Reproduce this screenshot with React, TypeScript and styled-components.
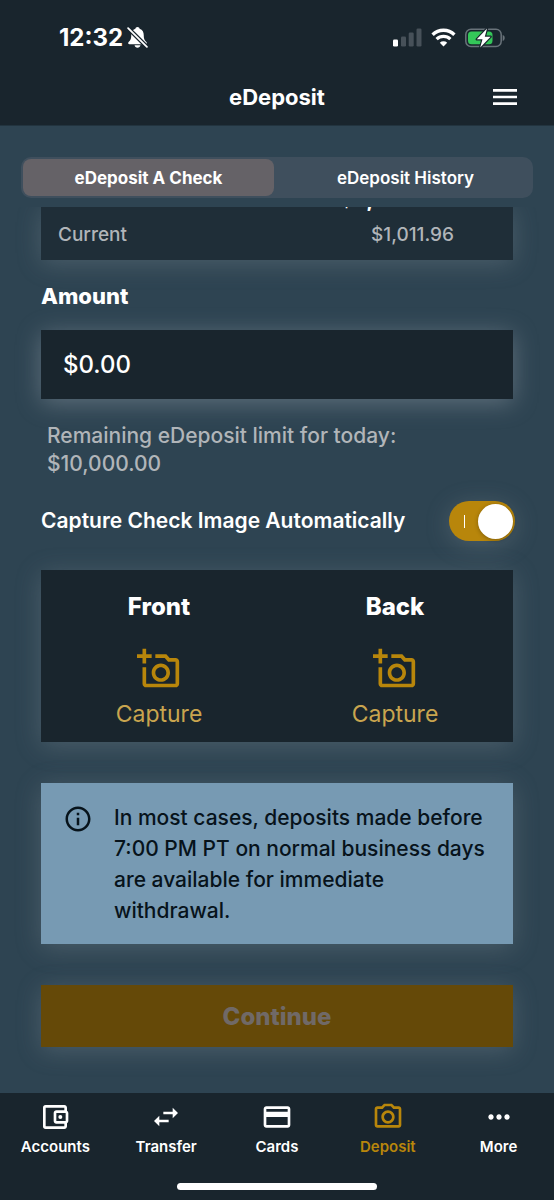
import React, { useState } from "react";
import styled, { createGlobalStyle } from "styled-components";
import {
  MdCreditCard,
  MdMenu,
  MdMoreHoriz,
  MdOutlineAccountBalanceWallet,
  MdOutlineAddAPhoto,
  MdOutlineInfo,
  MdOutlinePhotoCamera,
  MdSwapHoriz,
} from "react-icons/md";

const GlobalStyle = createGlobalStyle`
  *, *::before, *::after { box-sizing: border-box; }
  body {
    margin: 0;
    background: #2e4452;
    font-family: Inter, "Liberation Sans", sans-serif;
    color: #fff;
  }
  button, input { font-family: inherit; }
  h1, h2, h3, p, dl, dd, dt { margin: 0; }
`;

const color = {
  ink: "#19252d",
  gold: "#b8860b",
  muted: "#b1b5b9",
  glow: "0 4px 24px rgba(150, 160, 170, 0.28)",
};

const Screen = styled.div`
  display: flex;
  flex-direction: column;
  min-height: 100vh;
`;

const Header = styled.header`
  background: ${color.ink};
  border-bottom: 1px solid #22343f;
`;

const StatusBar = styled.div`
  display: flex;
  align-items: center;
  justify-content: space-between;
  height: 70px;
  padding: 5px 48px 0 59px;
`;

const StatusGroup = styled.div`
  display: flex;
  align-items: center;
  gap: 9px;
`;

const Clock = styled.div`
  display: flex;
  align-items: center;
  gap: 4px;
  font-size: 24px;
  font-weight: 700;
  line-height: 28px;
`;

const TitleBar = styled.div`
  display: grid;
  grid-template-columns: 1fr auto 1fr;
  align-items: center;
  height: 55px;
  padding: 0 33px 2px;
`;

const Title = styled.h1`
  grid-column: 2;
  font-size: 22px;
  font-weight: 700;
  line-height: 28px;
`;

const IconButton = styled.button`
  display: flex;
  justify-self: end;
  padding: 0;
  border: 0;
  background: none;
  color: #fff;
`;

const Main = styled.main`
  display: flex;
  flex: 1;
  flex-direction: column;
  padding-top: 31px;
`;

const Tabs = styled.div`
  display: grid;
  grid-template-columns: 1fr 1fr;
  column-gap: 6px;
  margin: 0 21px 9px;
  padding: 2px;
  border-radius: 10px;
  background: #3f4f5d;
`;

const Tab = styled.button<{ $active?: boolean }>`
  height: 37px;
  padding: 0;
  border: 0;
  border-radius: 8px;
  background: ${(p) => (p.$active ? "#656267" : "transparent")};
  color: #fff;
  font-size: 17px;
  font-weight: ${(p) => (p.$active ? 700 : 600)};
  line-height: 24px;
`;

const Viewport = styled.div`
  flex: 1;
  padding: 0 41px 45px;
  overflow: hidden;
`;

const Balances = styled.dl`
  display: flex;
  flex-direction: column;
  justify-content: flex-end;
  height: 53px;
  background: #1f2e38;
  box-shadow: ${color.glow};
  padding: 0 59px 11px 17px;
  clip-path: inset(0 -41px -41px);
`;

const Balance = styled.div<{ $strong?: boolean }>`
  display: flex;
  flex: none;
  align-items: baseline;
  justify-content: space-between;
  color: ${(p) => (p.$strong ? "#fff" : color.muted)};
  font-size: ${(p) => (p.$strong ? 21 : 19)}px;
  font-weight: ${(p) => (p.$strong ? 600 : 500)};
  line-height: ${(p) => (p.$strong ? 44 : 28)}px;

  dd { font-size: ${(p) => (p.$strong ? 26 : 19)}px; }
`;

const AmountLabel = styled.label`
  display: block;
  margin: 22px 0 19px;
  font-size: 22px;
  font-weight: 800;
  line-height: 29px;
`;

const AmountInput = styled.input`
  display: block;
  width: 100%;
  height: 69px;
  padding: 0 22px;
  border: 0;
  border-radius: 0;
  background: ${color.ink};
  box-shadow: 0 4px 24px rgba(170, 178, 188, 0.4);
  color: #fff;
  font-size: 24px;
  font-weight: 500;
`;

const Limit = styled.p`
  margin: 23px 6px 0;
  color: ${color.muted};
  font-size: 21px;
  font-weight: 500;
  line-height: 28px;
`;

const ToggleRow = styled.label`
  display: flex;
  align-items: center;
  justify-content: space-between;
  margin: 23px -2px 29px 0;
  font-size: 21px;
  font-weight: 600;
  line-height: 28px;
`;

const Toggle = styled.input`
  display: flex;
  align-items: center;
  justify-content: space-between;
  appearance: none;
  width: 66px;
  height: 40px;
  margin: 0;
  padding: 0 2px 0 15px;
  border-radius: 20px;
  background: #5a646c;
  box-shadow: ${color.glow};

  &::before {
    content: "";
    width: 1px;
    height: 13px;
    background: #fff;
  }
  &::after {
    content: "";
    width: 35px;
    height: 35px;
    border-radius: 50%;
    background: #fff;
    box-shadow: 0 1px 4px rgba(0, 0, 0, 0.3);
  }
  &:checked { background: ${color.gold}; }
`;

const CapturePanel = styled.section`
  display: grid;
  grid-template-columns: 1fr 1fr;
  padding: 21px 0 13px;
  background: ${color.ink};
  box-shadow: ${color.glow};
`;

const CaptureSide = styled.div`
  display: flex;
  flex-direction: column;
  align-items: center;
  gap: 24px;
`;

const SideTitle = styled.h2`
  font-size: 24px;
  font-weight: 800;
  line-height: 32px;
`;

const CaptureButton = styled.button`
  display: flex;
  flex-direction: column;
  align-items: center;
  gap: 8px;
  padding: 0;
  border: 0;
  background: none;
  color: #c9a54f;
  font-size: 23px;
  font-weight: 400;
  line-height: 30px;

  svg { color: ${color.gold}; }
`;

const Notice = styled.section`
  display: flex;
  gap: 21px;
  margin: 41px 0;
  padding: 19px 22px 18px;
  background: #779ab3;
  box-shadow: ${color.glow};
  color: #07131b;
  font-size: 21px;
  font-weight: 500;
  line-height: 31px;

  svg { flex: none; margin-top: 2px; }
`;

const Continue = styled.button`
  display: block;
  width: 100%;
  height: 62px;
  border: 0;
  background: #654908;
  box-shadow: ${color.glow};
  color: #706967;
  font-size: 24px;
  font-weight: 800;
`;

const TabBar = styled.nav`
  display: grid;
  grid-template-columns: repeat(5, 1fr);
  padding: 8px 0 26px;
  background: ${color.ink};
`;

const NavLink = styled.a<{ $active?: boolean }>`
  display: flex;
  flex-direction: column;
  align-items: center;
  gap: 4px;
  color: ${(p) => (p.$active ? color.gold : "#fff")};
  font-size: 15px;
  font-weight: 600;
  line-height: 20px;
  text-decoration: none;
`;

const HomeArea = styled.div`
  display: flex;
  justify-content: center;
  padding-bottom: 10px;
  background: ${color.ink};
`;

const HomeIndicator = styled.div`
  width: 36%;
  height: 7px;
  border-radius: 4px;
  background: #fff;
`;

const BellSlash = () => (
  <svg width="21" height="23" viewBox="0 0 20 22" aria-hidden="true">
    <path d="M10 1c-1.100 0-1.900.700-2 1.600C5 3.500 4 6 4 9c0 4-1.200 5-2.500 6.300-.800.900-.500 2.200.900 2.200h15.200c1.400 0 1.700-1.300.900-2.200C17.200 14 16 13 16 9c0-3-1-5.500-4-6.400C11.900 1.700 11.100 1 10 1zM7.200 18.500h5.600c-.200 1.400-1.300 2.300-2.800 2.300s-2.600-.900-2.800-2.300z" fill="#fff" />
    <path d="M0 1l20 20" stroke={color.ink} strokeWidth="4" />
    <path d="M1 2l18 18" stroke="#fff" strokeWidth="1.700" strokeLinecap="round" />
  </svg>
);

const Signal = () => (
  <svg width="29" height="19" viewBox="0 0 29 19" aria-hidden="true">
    <rect x="0" y="11.500" width="5" height="7" rx="1.300" fill="#fff" />
    <g fill="#475159">
      <rect x="8" y="8.500" width="5" height="10" rx="1.300" />
      <rect x="15.700" y="4.500" width="5" height="14" rx="1.300" />
      <rect x="23.500" y="0.500" width="5" height="18" rx="1.300" />
    </g>
  </svg>
);

const Wifi = () => (
  <svg width="25" height="19" viewBox="0 0 25 19" aria-hidden="true">
    <path d="M1.600 6.700a15.600 15.600 0 0 1 21.800 0" fill="none" stroke="#fff" strokeWidth="3.400" />
    <path d="M5.600 11.200a9.900 9.900 0 0 1 13.800 0" fill="none" stroke="#fff" strokeWidth="3.200" />
    <path d="M12.500 18.500l3.700-3.700a5.400 5.400 0 0 0-7.400 0z" fill="#fff" />
  </svg>
);

const Battery = () => (
  <svg width="41" height="20" viewBox="0 0 41 20" aria-hidden="true">
    <rect x="0.800" y="1.300" width="35.400" height="17.200" rx="5.200" fill="none" stroke="#69737a" strokeWidth="1.500" />
    <path d="M37.700 7v6c1.400-.400 2-1.600 2-3s-.600-2.600-2-3z" fill="#69737a" />
    <rect x="3" y="3.500" width="24.500" height="12.800" rx="3.500" fill="#34c759" />
    <path d="M22 0.500L11.800 11.300h5.700L15.200 19.500 25.600 8.700h-5.800z" fill="#fff" stroke={color.ink} strokeWidth="2.400" strokeLinejoin="round" paintOrder="stroke" />
  </svg>
);

const navItems = [
  { label: "Accounts", Icon: MdOutlineAccountBalanceWallet },
  { label: "Transfer", Icon: MdSwapHoriz },
  { label: "Cards", Icon: MdCreditCard },
  { label: "Deposit", Icon: MdOutlinePhotoCamera, active: true },
  { label: "More", Icon: MdMoreHoriz },
];

export default function App() {
  const [amount, setAmount] = useState("$0.00");
  const [auto, setAuto] = useState(true);

  return (
    <Screen>
      <GlobalStyle />
      <Header>
        <StatusBar>
          <Clock>
            12:32
            <BellSlash />
          </Clock>
          <StatusGroup>
            <Signal />
            <Wifi />
            <Battery />
          </StatusGroup>
        </StatusBar>
        <TitleBar>
          <Title>eDeposit</Title>
          <IconButton aria-label="Menu">
            <MdMenu size={32} />
          </IconButton>
        </TitleBar>
      </Header>

      <Main>
        <Tabs role="tablist">
          <Tab role="tab" aria-selected="true" $active>eDeposit A Check</Tab>
          <Tab role="tab" aria-selected="false">eDeposit History</Tab>
        </Tabs>

        <Viewport>
          <Balances>
            <Balance $strong>
              <dt>Available</dt>
              <dd>$1,011.96</dd>
            </Balance>
            <Balance>
              <dt>Current</dt>
              <dd>$1,011.96</dd>
            </Balance>
          </Balances>

          <AmountLabel htmlFor="amount">Amount</AmountLabel>
          <AmountInput
            id="amount"
            inputMode="decimal"
            value={amount}
            onChange={(e) => setAmount(e.target.value)}
          />
          <Limit>
            Remaining eDeposit limit for today:
            <br />
            $10,000.00
          </Limit>

          <ToggleRow>
            Capture Check Image Automatically
            <Toggle
              type="checkbox"
              role="switch"
              checked={auto}
              onChange={(e) => setAuto(e.target.checked)}
            />
          </ToggleRow>

          <CapturePanel>
            {["Front", "Back"].map((side) => (
              <CaptureSide key={side}>
                <SideTitle>{side}</SideTitle>
                <CaptureButton aria-label={`Capture ${side}`}>
                  <MdOutlineAddAPhoto size={44} />
                  Capture
                </CaptureButton>
              </CaptureSide>
            ))}
          </CapturePanel>

          <Notice>
            <MdOutlineInfo size={30} />
            <p>
              In most cases, deposits made before 7:00 PM PT on normal business
              days are available for immediate withdrawal.
            </p>
          </Notice>

          <Continue disabled>Continue</Continue>
        </Viewport>
      </Main>

      <TabBar>
        {navItems.map(({ label, Icon, active }) => (
          <NavLink key={label} href="#" $active={active}>
            <Icon size={32} />
            {label}
          </NavLink>
        ))}
      </TabBar>
      <HomeArea>
        <HomeIndicator />
      </HomeArea>
    </Screen>
  );
}
